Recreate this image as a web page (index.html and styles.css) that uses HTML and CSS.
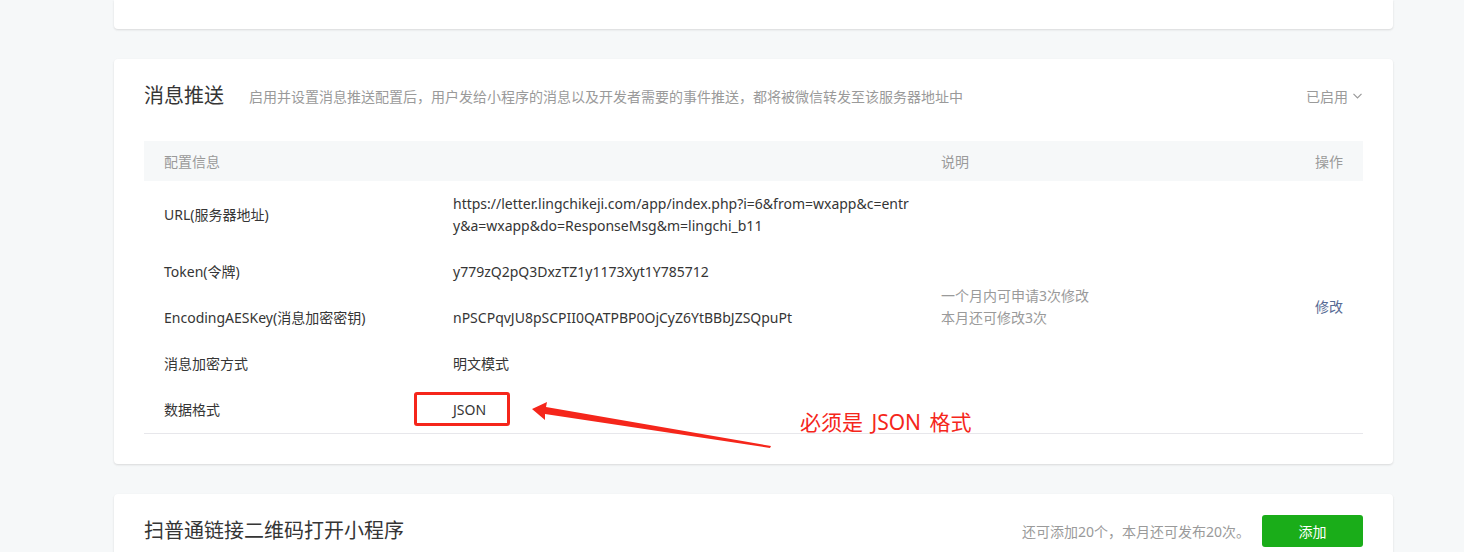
FILE: index.html
```html
<!DOCTYPE html>
<html lang="zh-CN">
<head>
<meta charset="utf-8">
<title>消息推送</title>
<link rel="stylesheet" href="styles.css">
</head>
<body>
<div class="page">
  <section class="card card-top"></section>

  <section class="card card-msg">
    <div class="card-hd">
      <h2 class="card-title">消息推送</h2>
      <p class="card-desc">启用并设置消息推送配置后，用户发给小程序的消息以及开发者需要的事件推送，都将被微信转发至该服务器地址中</p>
      <div class="status">已启用<svg class="chev" width="9" height="6" viewBox="0 0 9 6"><path d="M0.5 0.8 L4.5 4.8 L8.5 0.8" fill="none" stroke="#9a9a9a" stroke-width="1.2"/></svg></div>
    </div>
    <table class="cfg-table">
      <colgroup>
        <col class="c1"><col class="c2"><col class="c3"><col class="c4">
      </colgroup>
      <thead>
        <tr><th>配置信息</th><th></th><th>说明</th><th class="ta-r">操作</th></tr>
      </thead>
      <tbody>
        <tr>
          <td>URL(服务器地址)</td>
          <td class="val">https://letter.lingchikeji.com/app/index.php?i=6&amp;from=wxapp&amp;c=entr<br>y&amp;a=wxapp&amp;do=ResponseMsg&amp;m=lingchi_b11</td>
          <td class="note" rowspan="5">一个月内可申请3次修改<br>本月还可修改3次</td>
          <td class="ta-r op" rowspan="5"><a class="link">修改</a></td>
        </tr>
        <tr><td>Token(令牌)</td><td class="val">y779zQ2pQ3DxzTZ1y1173Xyt1Y785712</td></tr>
        <tr><td>EncodingAESKey(消息加密密钥)</td><td class="val">nPSCPqvJU8pSCPII0QATPBP0OjCyZ6YtBBbJZSQpuPt</td></tr>
        <tr><td>消息加密方式</td><td class="val">明文模式</td></tr>
        <tr class="last"><td>数据格式</td><td class="val">JSON</td></tr>
      </tbody>
    </table>

    <div class="mark-box"></div>
    <svg class="mark-arrow" width="260" height="60" viewBox="0 0 260 60">
      <polygon fill="#f5261b" points="2,10 17,3 16,8 241,47 240,49 15,15 15,21"/>
    </svg>
    <div class="mark-text">必须是 JSON 格式</div>
  </section>

  <section class="card card-qr">
    <div class="card-hd">
      <h2 class="card-title">扫普通链接二维码打开小程序</h2>
      <div class="qr-right">
        <span class="qr-tip">还可添加20个，本月还可发布20次。</span>
        <button class="btn-green">添加</button>
      </div>
    </div>
  </section>
</div>
</body>
</html>
```

FILE: styles.css
```css
html, body {
  margin: 0;
  padding: 0;
  background: #f6f8f9;
}
body {
  font-family: "Noto Sans", "Noto Sans CJK SC", sans-serif;
  font-size: 14px;
  color: #353535;
  overflow: hidden;
}
.page {
  width: 1279px;
  margin-left: 114px;
}
.card {
  background: #fff;
  border-radius: 4px;
  box-shadow: 0 1px 2px rgba(150, 150, 150, 0.3);
  box-sizing: border-box;
  margin-bottom: 30px;
}
.card-top {
  height: 29px;
  border-radius: 0 0 4px 4px;
}
.card-msg {
  position: relative;
  padding: 20px 30px 30px;
}
.card-qr {
  padding: 20px 30px 20px;
  margin-bottom: 0;
}
.card-hd {
  display: flex;
  align-items: center;
  height: 34px;
}
.card-title {
  margin: 0;
  font-size: 20px;
  font-weight: 400;
  color: #353535;
  line-height: 34px;
}
.card-desc {
  margin: 0 0 0 25px;
  color: #9a9a9a;
  font-size: 14px;
  line-height: 20px;
  flex: 1;
  padding-top: 1px;
}
.status {
  color: #9a9a9a;
  display: flex;
  align-items: center;
  gap: 5px;
  padding-right: 1px;
}
.chev { display: block; }

.cfg-table {
  width: 100%;
  margin-top: 28px;
  border-collapse: collapse;
  table-layout: fixed;
}
.c1 { width: 289px; }
.c2 { width: 488px; }
.c3 { width: 322px; }
.c4 { width: 120px; }
.cfg-table th {
  background: #f6f8f9;
  height: 40px;
  padding: 0 20px;
  text-align: left;
  font-weight: 400;
  color: #9a9a9a;
}
.cfg-table th.ta-r, .cfg-table td.ta-r { text-align: right; }
.cfg-table td {
  padding: 12px 20px;
  line-height: 22px;
  vertical-align: middle;
  white-space: nowrap;
}
.cfg-table tr.last td { border-bottom: 1px solid #e7e7eb; }
.cfg-table td.note {
  color: #9a9a9a;
  border-bottom: 1px solid #e7e7eb;
}
.cfg-table td.op { border-bottom: 1px solid #e7e7eb; }
.link {
  color: #576b95;
  cursor: pointer;
}

.mark-box {
  position: absolute;
  left: 300px;
  top: 333px;
  width: 96px;
  height: 34px;
  box-sizing: border-box;
  border: 3px solid #f5261b;
  border-radius: 3px;
}
.mark-arrow {
  position: absolute;
  left: 416px;
  top: 340px;
}
.mark-text {
  position: absolute;
  left: 686px;
  top: 350px;
  font-size: 21px;
  line-height: 26px;
  word-spacing: 3px;
  color: #f5261b;
  white-space: nowrap;
}

.qr-right {
  margin-left: auto;
  display: flex;
  align-items: center;
  gap: 12px;
}
.qr-tip { color: #9a9a9a; }
.btn-green {
  width: 101px;
  height: 32px;
  border: 0;
  border-radius: 3px;
  background: #1aad19;
  color: #fff;
  font-family: inherit;
  font-size: 14px;
  padding: 0;
}
```
